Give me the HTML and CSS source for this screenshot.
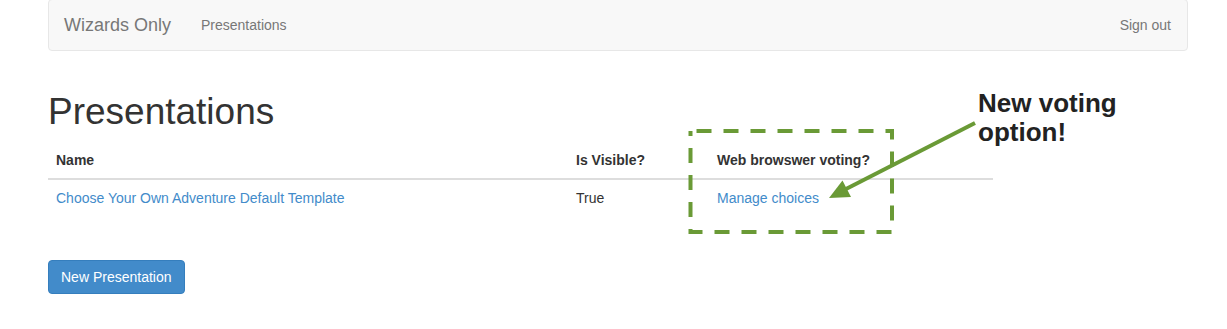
FILE: index.html
```html
<!DOCTYPE html>
<html lang="en">
<head>
    <meta charset="UTF-8">
    <title>Presentations</title>
    <link rel="stylesheet" href="styles.css">
</head>
<body>
    <div class="container">
        <!-- top navigation -->
        <nav class="navbar">
            <a class="brand" href="#">Wizards Only</a>
            <a class="nav-link" href="#">Presentations</a>
            <a class="nav-link nav-right" href="#">Sign out</a>
        </nav>

        <h1>Presentations</h1>

        <table class="table">
            <thead>
                <tr>
                    <th class="col-name">Name</th>
                    <th class="col-visible">Is Visible?</th>
                    <th class="col-voting">Web browswer voting?</th>
                </tr>
            </thead>
            <tbody>
                <tr>
                    <td><a href="#">Choose Your Own Adventure Default Template</a></td>
                    <td>True</td>
                    <td><a href="#">Manage choices</a></td>
                </tr>
            </tbody>
        </table>

        <div class="actions">
            <button type="button" class="btn">New Presentation</button>
        </div>
    </div>

    <!-- annotation drawn over the page -->
    <svg class="annotation" width="1227" height="329" viewBox="0 0 1227 329">
        <rect x="690.5" y="131" width="201.5" height="101" fill="none" stroke="#6a9a36" stroke-width="4" stroke-dasharray="15 12" stroke-dashoffset="-6"/>
        <line x1="975" y1="123" x2="846" y2="189" stroke="#6a9a36" stroke-width="4"/>
        <polygon points="829,198 842.5,180.5 851,197" fill="#6a9a36"/>
    </svg>
    <div class="note">New voting<br>option!</div>
</body>
</html>
```

FILE: styles.css
```css
body {
    margin: 0;
    font-family: "Liberation Sans", Arial, sans-serif;
    font-size: 14px;
    line-height: 20px;
    color: #333;
    background-color: #fff;
}
a {
    color: #428bca;
    text-decoration: none;
}
.container {
    width: 1140px;
    margin-left: 48px;
}
.navbar {
    display: flex;
    align-items: center;
    height: 50px;
    margin-top: -1px;
    margin-bottom: 20px;
    background-color: #f8f8f8;
    border: 1px solid #e7e7e7;
    border-radius: 4px;
}
.brand {
    padding: 15px;
    font-size: 18px;
    line-height: 20px;
    color: #777;
}
.nav-link {
    padding: 15px;
    color: #777;
}
.nav-right {
    margin-left: auto;
    padding-right: 16px;
}
h1 {
    margin: 41px 0 10px;
    font-size: 37px;
    font-weight: 500;
    line-height: 40px;
    color: #333;
}
.table {
    width: 945px;
    border-collapse: collapse;
    border-spacing: 0;
}
.table th,
.table td {
    padding: 8px;
    text-align: left;
    vertical-align: top;
}
.table th {
    font-weight: bold;
    border-bottom: 2px solid #ddd;
}
.col-name {
    width: 504px;
}
.col-visible {
    width: 125px;
}
.actions {
    margin-top: 44px;
}
.btn {
    padding: 6px 12px;
    font-family: inherit;
    font-size: 14px;
    line-height: 20px;
    color: #fff;
    background-color: #428bca;
    border: 1px solid #357ebd;
    border-radius: 4px;
    cursor: pointer;
}
.annotation {
    position: absolute;
    left: 0;
    top: 0;
    pointer-events: none;
}
.note {
    position: absolute;
    left: 978px;
    top: 89px;
    font-size: 26px;
    line-height: 29px;
    font-weight: bold;
    color: #222;
}
```
